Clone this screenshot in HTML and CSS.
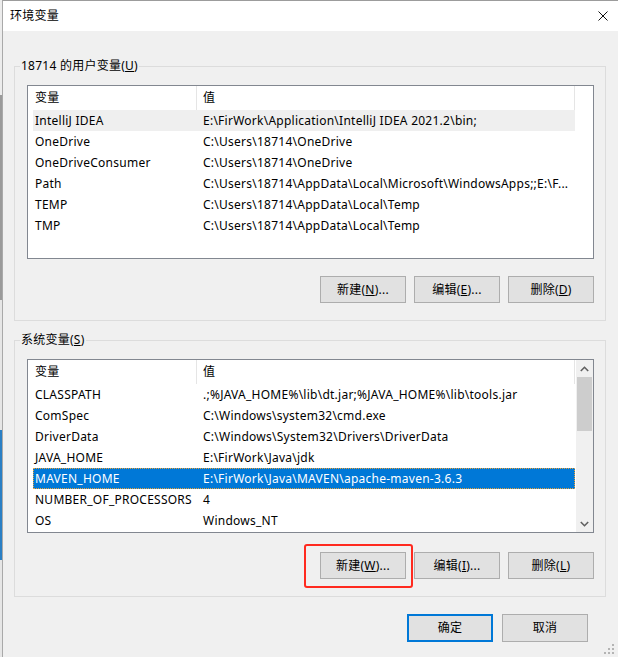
FILE: index.html
```html
<!DOCTYPE html>
<html lang="zh-CN">
<head>
    <meta charset="UTF-8">
    <title>环境变量</title>
    <link rel="stylesheet" href="styles.css">
</head>
<body>
<div class="desktop">
    <div class="edge"></div>
    <div class="dialog">
        <div class="titlebar">
            <span class="title">环境变量</span>
            <svg class="close" width="10" height="10" viewBox="0 0 10 10">
                <path d="M0.5 0.5 L9.5 9.5 M9.5 0.5 L0.5 9.5" stroke="#111" stroke-width="1" fill="none"/>
            </svg>
        </div>

        <div class="content">
            <fieldset class="group group-user">
                <legend>18714 的用户变量(<u>U</u>)</legend>
                <div class="list">
                    <div class="columns">
                        <div class="head">
                            <div class="h-name">变量</div>
                            <div class="h-value">值</div>
                        </div>
                        <div class="row row-soft"><div class="name">IntelliJ IDEA</div><div class="value">E:\FirWork\Application\IntelliJ IDEA 2021.2\bin;</div></div>
                        <div class="row"><div class="name">OneDrive</div><div class="value">C:\Users\18714\OneDrive</div></div>
                        <div class="row"><div class="name">OneDriveConsumer</div><div class="value">C:\Users\18714\OneDrive</div></div>
                        <div class="row"><div class="name">Path</div><div class="value">C:\Users\18714\AppData\Local\Microsoft\WindowsApps;;E:\F...</div></div>
                        <div class="row"><div class="name">TEMP</div><div class="value">C:\Users\18714\AppData\Local\Temp</div></div>
                        <div class="row"><div class="name">TMP</div><div class="value">C:\Users\18714\AppData\Local\Temp</div></div>
                    </div>
                </div>
                <div class="buttons">
                    <div class="btn">新建(<u>N</u>)...</div>
                    <div class="btn">编辑(<u>E</u>)...</div>
                    <div class="btn">删除(<u>D</u>)</div>
                </div>
            </fieldset>

            <fieldset class="group group-system">
                <legend>系统变量(<u>S</u>)</legend>
                <div class="list">
                    <div class="columns">
                        <div class="head">
                            <div class="h-name">变量</div>
                            <div class="h-value">值</div>
                        </div>
                        <div class="row"><div class="name">CLASSPATH</div><div class="value">.;%JAVA_HOME%\lib\dt.jar;%JAVA_HOME%\lib\tools.jar</div></div>
                        <div class="row"><div class="name">ComSpec</div><div class="value">C:\Windows\system32\cmd.exe</div></div>
                        <div class="row"><div class="name">DriverData</div><div class="value">C:\Windows\System32\Drivers\DriverData</div></div>
                        <div class="row"><div class="name">JAVA_HOME</div><div class="value">E:\FirWork\Java\jdk</div></div>
                        <div class="row row-selected"><div class="name">MAVEN_HOME</div><div class="value">E:\FirWork\Java\MAVEN\apache-maven-3.6.3</div></div>
                        <div class="row"><div class="name">NUMBER_OF_PROCESSORS</div><div class="value">4</div></div>
                        <div class="row"><div class="name">OS</div><div class="value">Windows_NT</div></div>
                    </div>
                    <div class="scrollbar">
                        <div class="arrow">
                            <svg width="9" height="6" viewBox="0 0 9 6"><path d="M0.8 5 L4.5 1.3 L8.2 5" stroke="#606060" stroke-width="1.6" fill="none"/></svg>
                        </div>
                        <div class="track"><div class="thumb"></div></div>
                        <div class="arrow">
                            <svg width="9" height="6" viewBox="0 0 9 6"><path d="M0.8 1 L4.5 4.7 L8.2 1" stroke="#606060" stroke-width="1.6" fill="none"/></svg>
                        </div>
                    </div>
                </div>
                <div class="buttons buttons-system">
                    <div class="btn btn-marked">新建(<u>W</u>)...<span class="mark"></span></div>
                    <div class="btn">编辑(<u>I</u>)...</div>
                    <div class="btn">删除(<u>L</u>)</div>
                </div>
            </fieldset>

            <div class="footer">
                <div class="btn btn-default">确定</div>
                <div class="btn">取消</div>
            </div>
        </div>

        <svg class="grip" width="12" height="12" viewBox="0 0 12 12">
            <rect x="9" y="1" width="2" height="2" fill="#b4b4b4"/>
            <rect x="5" y="5" width="2" height="2" fill="#b4b4b4"/>
            <rect x="9" y="5" width="2" height="2" fill="#b4b4b4"/>
            <rect x="1" y="9" width="2" height="2" fill="#b4b4b4"/>
            <rect x="5" y="9" width="2" height="2" fill="#b4b4b4"/>
            <rect x="9" y="9" width="2" height="2" fill="#b4b4b4"/>
        </svg>
    </div>
</div>
</body>
</html>
```

FILE: styles.css
```css
body {
    margin: 0;
    padding: 0;
    font-family: 'Noto Sans', 'Noto Sans CJK SC', sans-serif;
    font-size: 12px;
    line-height: 16px;
    letter-spacing: 0.25px;
    color: #000;
    background-color: #f0f0f0;
}

.desktop {
    display: flex;
    width: 618px;
    height: 657px;
    overflow: hidden;
}

.edge {
    width: 2px;
    flex-shrink: 0;
    background: linear-gradient(to bottom, #ececec 0 95px, #9a9a9a 95px 300px, #e6e6e6 300px 430px, #2a7fc4 430px 560px, #e6e6e6 560px);
}

.dialog {
    position: relative;
    flex: 1;
    background-color: #f0f0f0;
    border-left: 1px solid #a9a9a9;
    border-top: 1px solid #9c9c9c;
}

.titlebar {
    height: 30px;
    background-color: #fff;
    display: flex;
    align-items: center;
    justify-content: space-between;
    padding: 0 10px 0 7px;
}

.close {
    display: block;
}

.content {
    padding: 27px 12px 0 11px;
}

/* рамки групп */
.group {
    margin: 0;
    border: 1px solid #dcdcdc;
    padding: 11px 11px 17px 12px;
    min-width: 0;
}

.group legend {
    margin-left: -7px;
    padding: 0 1px;
}

.group-system {
    margin-top: 11px;
}

.list {
    display: flex;
    height: 172px;
    border: 1px solid #828790;
    background-color: #fff;
    padding-left: 5px;
}

.columns {
    width: 542px;
    flex-shrink: 0;
}

.head {
    display: flex;
    height: 24px;
    align-items: center;
}

.h-name {
    width: 164px;
    height: 24px;
    line-height: 24px;
    padding-left: 2px;
    box-sizing: border-box;
    border-right: 1px solid #e5e5e5;
}

.h-value {
    flex: 1;
    height: 24px;
    line-height: 24px;
    padding-left: 6px;
    border-right: 1px solid #e5e5e5;
}

.row {
    display: flex;
    height: 21px;
    line-height: 21px;
    white-space: nowrap;
}

.name {
    width: 168px;
    padding-left: 2px;
    box-sizing: border-box;
    flex-shrink: 0;
    overflow: hidden;
}

.value {
    flex: 1;
    padding-left: 2px;
    overflow: hidden;
}

.row-soft {
    background-color: #efefef;
}

.row-selected {
    background-color: #0078d7;
    color: #fff;
    outline: 1px dotted #e8a23a;
    outline-offset: -1px;
}

.scrollbar {
    width: 17px;
    margin-left: 1px;
    display: flex;
    flex-direction: column;
    background-color: #f0f0f0;
}

.arrow {
    height: 17px;
    display: flex;
    align-items: center;
    justify-content: center;
}

.track {
    flex: 1;
    padding: 0 1px;
}

.thumb {
    height: 54px;
    background-color: #cdcdcd;
}

/* кнопки */
.buttons {
    display: flex;
    justify-content: flex-end;
    gap: 8px;
    margin-top: 17px;
}

.buttons-system {
    margin-top: 19px;
}

.btn {
    position: relative;
    width: 86px;
    height: 27px;
    box-sizing: border-box;
    border: 1px solid #adadad;
    background-color: #e1e1e1;
    display: flex;
    align-items: center;
    justify-content: center;
}

.btn-default {
    height: 28px;
    border: 2px solid #0078d7;
}

.footer {
    display: flex;
    justify-content: flex-end;
    gap: 9px;
    margin-top: 17px;
    padding-right: 18px;
}

.footer .btn {
    height: 28px;
}

.mark {
    position: absolute;
    left: -17px;
    right: -8px;
    top: -9px;
    bottom: -10px;
    border: 2px solid #ff2a1f;
    border-radius: 3px;
}

.grip {
    position: absolute;
    right: 3px;
    bottom: 2px;
}
```
